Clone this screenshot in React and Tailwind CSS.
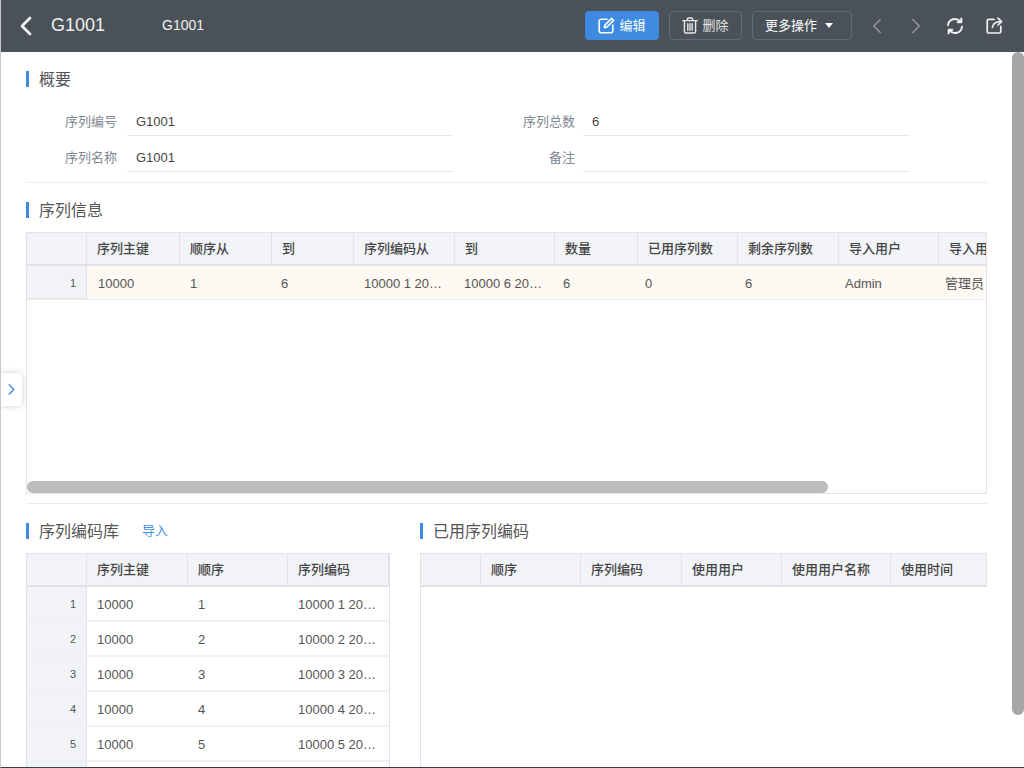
import React from 'react'
import { ChevronLeft, ChevronRight } from 'lucide-react'

const font = { fontFamily: '"Liberation Sans", "Noto Sans CJK SC", sans-serif' }

const infoCols = [
  ['序列主键', 93], ['顺序从', 92], ['到', 82], ['序列编码从', 101], ['到', 100],
  ['数量', 83], ['已用序列数', 100], ['剩余序列数', 101], ['导入用户', 100], ['导入用户名称', 100],
]
// body cells drift slightly from the header columns in the reference
const infoRow = [
  ['10000', 92], ['1', 91], ['6', 83], ['10000 1 20…', 100], ['10000 6 20…', 99],
  ['6', 82], ['0', 100], ['6', 100], ['Admin', 100], ['管理员', 100],
]
const libCols = [['序列主键', 101], ['顺序', 100], ['序列编码', 101]]
const usedCols = [['顺序', 100], ['序列编码', 101], ['使用用户', 100], ['使用用户名称', 109], ['使用时间', 96]]

function EditIcon() {
  return (
    <svg width="17" height="17" viewBox="0 0 17 17" fill="none" stroke="currentColor" strokeWidth="1.6" strokeLinecap="round" strokeLinejoin="round">
      <path d="M9 2.2H3.2a2 2 0 0 0-2 2v9.6a2 2 0 0 0 2 2h9.6a2 2 0 0 0 2-2V8" />
      <path d="M13.6 1.4l2 2L9 10l-2.6.6L7 8z" />
    </svg>
  )
}

function TrashIcon() {
  return (
    <svg width="16" height="17" viewBox="0 0 16 17" fill="none" stroke="currentColor" strokeWidth="1.4" strokeLinecap="round" strokeLinejoin="round">
      <path d="M.7 3.6h14.6" />
      <path d="M5.4 3.4V2a1 1 0 0 1 1-1h3.2a1 1 0 0 1 1 1v1.4" />
      <path d="M2.4 3.8v10.6a1.6 1.6 0 0 0 1.6 1.6h8a1.6 1.6 0 0 0 1.6-1.6V3.8" />
      <path d="M5.8 6.6v6.6M8 6.6v6.6M10.2 6.6v6.6" />
    </svg>
  )
}

function RefreshIcon() {
  return (
    <svg width="18" height="18" viewBox="0 0 18 18" fill="none" stroke="currentColor" strokeWidth="1.9" strokeLinecap="round" strokeLinejoin="round">
      <path d="M2 8.2A7 7 0 0 1 14.4 4.6" />
      <path d="M16 9.8A7 7 0 0 1 3.6 13.4" />
      <path d="M15.4 1.4v3.8h-3.8" fill="currentColor" />
      <path d="M2.6 16.6v-3.8h3.8" fill="currentColor" />
    </svg>
  )
}

function OpenIcon() {
  return (
    <svg width="17" height="17" viewBox="0 0 17 17" fill="none" stroke="currentColor" strokeWidth="1.7" strokeLinecap="round" strokeLinejoin="round">
      <path d="M8 2.4H2.6a1.4 1.4 0 0 0-1.4 1.4v10.8a1.4 1.4 0 0 0 1.4 1.4h10.8a1.4 1.4 0 0 0 1.4-1.4V9.4" />
      <path d="M6.4 10.4C7 6.6 9.6 4.6 14.4 4.6" />
      <path d="M12 1.2l3.6 3.4-3.6 3.4" />
    </svg>
  )
}

function SectionTitle({ children, extra }) {
  return (
    <div className="flex items-center h-4 text-[16px] text-[#555] border-l-[3px] border-[#3d8ae0] pl-[10px]">
      <span className="mt-[2px]">{children}</span>
      {extra}
    </div>
  )
}

function Field({ label, value, labelW, lineW, gap = 10 }) {
  return (
    <div className="flex h-9">
      <div className="text-[13px] text-[#7f8791] text-right pt-[8px] leading-[28px]" style={{ width: labelW }}>{label}</div>
      <div className="border-b border-[#e6e8ea] pl-[9px] text-[13px] text-[#444] pt-[8px] leading-[28px] h-[36px]" style={{ width: lineW, marginLeft: gap }}>{value}</div>
    </div>
  )
}

function HeaderRow({ cols, indexW = 60 }) {
  return (
    <div className="flex h-[33px] shrink-0 bg-[#f2f3f7] border-b-2 border-[#dfe2e8] w-max">
      <div className="border-r border-[#dfe2e8]" style={{ width: indexW }} />
      {cols.map(([name, w], i) => (
        <div key={i} className="border-r border-[#dfe2e8] pl-[10px] text-[13px] font-medium text-[#444] leading-[32px] whitespace-nowrap overflow-hidden" style={{ width: w }}>{name}</div>
      ))}
    </div>
  )
}

function InfoTable() {
  return (
    <div className="relative mt-[14px] h-[262px] border border-[#dfe2e8] overflow-hidden">
      <HeaderRow cols={infoCols} />
      <div className="flex h-[34px] w-max border-b border-[#eeeff2]">
        <div className="w-[60px] bg-[#f2f3f7] border-r border-b border-[#dfe2e8] text-[11px] text-[#555] text-right pr-[10px] leading-[35px]">1</div>
        {infoRow.map(([v, w], i) => (
          <div key={i} className="bg-[#fef9f2] pl-[11px] text-[13px] text-[#555] leading-[35px] whitespace-nowrap" style={{ width: w }}>{v}</div>
        ))}
      </div>
      {/* horizontal scrollbar thumb */}
      <div className="absolute left-0 bottom-0 w-[801px] h-3 rounded-md bg-[#bcbcbc]" />
    </div>
  )
}

function LibTable() {
  const rows = [1, 2, 3, 4, 5]
  return (
    <div className="mt-[14px] w-[364px] h-[215px] border border-b-0 border-[#dfe2e8] overflow-hidden">
      <HeaderRow cols={libCols} />
      {rows.map(n => (
        <div key={n} className="flex h-[35px] border-b-2 border-[#f0f0f2]">
          <div className="w-[60px] bg-[#f2f3f7] border-r border-[#dfe2e8] text-[11px] text-[#555] text-right pr-[10px] leading-[35px]">{n}</div>
          <div className="w-[100px] pl-[10px] text-[13px] text-[#555] leading-[35px]">10000</div>
          <div className="w-[100px] pl-[11px] text-[13px] text-[#555] leading-[35px]">{n}</div>
          <div className="w-[101px] pl-[11px] text-[13px] text-[#555] leading-[35px] whitespace-nowrap">{`10000 ${n} 20…`}</div>
        </div>
      ))}
      <div className="h-2 w-[60px] bg-[#f2f3f7] border-r border-[#dfe2e8]" />
    </div>
  )
}

function UsedTable() {
  return (
    <div className="mt-[14px] h-[215px] border-l border-t border-[#dfe2e8] overflow-hidden">
      <HeaderRow cols={usedCols} />
    </div>
  )
}

export default function App() {
  return (
    <div className="relative w-[1024px] h-[768px] overflow-hidden flex flex-col bg-white border-l border-b border-l-[#c8c8c8] border-b-[#33404a]" style={font}>
      {/* Top bar */}
      <header className="h-[52px] shrink-0 bg-[#4a5158] flex items-center pb-[1px] text-white">
        <ChevronLeft size={32} strokeWidth={2} className="ml-[9px] text-[#f4f4f4]" />
        <div className="ml-[9px] text-[18px] w-[111px] text-[#f0f0f0]">G1001</div>
        <div className="text-[14px] text-[#f0f0f0]">G1001</div>
        <div className="flex-1" />
        <button className="h-[29px] w-[74px] rounded bg-[#3d8ae0] flex items-center justify-center gap-[4px] text-[13px]">
          <EditIcon /> 编辑
        </button>
        <button className="ml-[10px] h-[29px] w-[73px] rounded border border-[#626c76] flex items-center justify-center gap-[4px] text-[13px] text-[#e6e6e6]">
          <TrashIcon /> 删除
        </button>
        <button className="ml-[10px] h-[29px] w-[100px] rounded border border-[#626c76] flex items-center pl-[12px] gap-[8px] text-[13px]">
          更多操作
          <span className="w-0 h-0 border-x-4 border-x-transparent border-t-[5px] border-t-white" />
        </button>
        <ChevronLeft size={26} strokeWidth={1.6} className="ml-[12px] text-[#8d9399]" />
        <ChevronRight size={26} strokeWidth={1.6} className="ml-[13px] text-[#8d9399]" />
        <div className="ml-[17px] text-[#f0f0f0]"><RefreshIcon /></div>
        <div className="ml-[22px] mr-[21px] text-[#f0f0f0]"><OpenIcon /></div>
      </header>

      {/* Body */}
      <main className="relative flex-1 pl-[25px] pr-[37px] pt-[19px] overflow-hidden">
        <SectionTitle>概要</SectionTitle>
        <div className="mt-[13px] flex pb-[10px] border-b border-[#e9ebec]">
          <div className="flex flex-col">
            <Field label="序列编号" value="G1001" labelW={91} lineW={326} />
            <Field label="序列名称" value="G1001" labelW={91} lineW={326} />
          </div>
          <div className="flex flex-col">
            <Field label="序列总数" value="6" labelW={122} lineW={327} gap={8} />
            <Field label="备注" value="" labelW={122} lineW={327} gap={8} />
          </div>
        </div>

        <div className="mt-[19px]"><SectionTitle>序列信息</SectionTitle></div>
        <InfoTable />
        <div className="mt-[9px] border-t border-[#e9ebec]" />

        <div className="mt-[19px] flex">
          <div className="w-[394px] shrink-0">
            <SectionTitle extra={<span className="ml-[23px] text-[13px] text-[#4a90e2]">导入</span>}>序列编码库</SectionTitle>
            <LibTable />
          </div>
          <div className="flex-1 min-w-0">
            <SectionTitle>已用序列编码</SectionTitle>
            <UsedTable />
          </div>
        </div>

        {/* Sidebar expand handle */}
        <div className="absolute left-[-1px] top-[321px] w-[22px] h-[33px] bg-white rounded-r shadow-[0_0_6px_rgba(0,0,0,0.2)] flex items-center justify-center">
          <ChevronRight size={19} strokeWidth={1.6} className="text-[#3d8ae0]" />
        </div>
        {/* Page scrollbar thumb */}
        <div className="absolute right-0 top-0 w-3 h-[663px] rounded-md bg-[#a6a6a6]" />
      </main>
    </div>
  )
}
